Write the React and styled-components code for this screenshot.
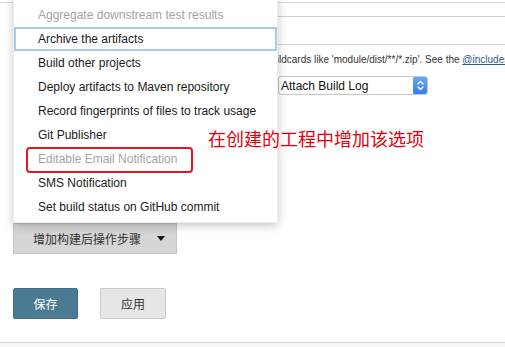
import React from "react";
import styled, { createGlobalStyle } from "styled-components";

const Global = createGlobalStyle`
  html, body { margin: 0; padding: 0; background: #fff; }
  body { font-family: "Liberation Sans", Arial, "Noto Sans CJK SC", sans-serif; color: #222; }
`;

const Page = styled.div`
  position: relative;
  width: 505px;
  height: 347px;
  overflow: hidden;
  display: flex;
  flex-direction: column;
  background: #fff;
`;

const Fields = styled.div`
  height: 223px;
  padding-top: 2px;
  box-sizing: border-box;
  display: flex;
  flex-direction: column;
`;

const Divider = styled.div`
  height: 1px;
  background: #d9d9d9;
`;

const TextInput = styled.div`
  margin-top: 13px;
  margin-left: 13px;
  width: 560px;
  height: 29px;
  box-sizing: border-box;
  border: 1px solid #cfcfcf;
`;

const HelpRow = styled.div`
  margin-top: 8px;
  display: flex;
  white-space: nowrap;
  font-size: 10px;
  line-height: 14px;
  color: #333;
`;

const HelpPrefix = styled.span`
  width: 279px;
  flex: none;
  display: flex;
  justify-content: flex-end;
  overflow: hidden;
`;

const HelpLink = styled.span`
  color: #2a5a8a;
  text-decoration: underline;
`;

const Select = styled.div`
  margin-top: 9px;
  margin-left: 278px;
  width: 150px;
  height: 19px;
  box-sizing: border-box;
  border: 1px solid #c6c6c6;
  border-radius: 3px;
  display: flex;
  align-items: center;
  justify-content: space-between;
  font-size: 12px;
  color: #111;
  padding-left: 2px;
  background: #fff;
  overflow: hidden;
`;

const Stepper = styled.div`
  width: 15px;
  height: 19px;
  margin-right: -1px;
  border-radius: 3px;
  background: linear-gradient(#6aaaf7, #2f7ef0);
  display: flex;
  align-items: center;
  justify-content: center;
`;

const AddStepButton = styled.div`
  margin-left: 13px;
  width: 164px;
  height: 31px;
  box-sizing: border-box;
  border: 1px solid #c4c4c4;
  background: #d6d6d6;
  display: flex;
  align-items: center;
  justify-content: space-between;
  padding: 0 11px 0 19px;
  font-family: "Noto Sans CJK SC", sans-serif;
  font-size: 12px;
  color: #333;
`;

const Actions = styled.div`
  margin-top: 34px;
  margin-left: 13px;
  display: flex;
  gap: 22px;
`;

const ActionButton = styled.div`
  width: ${(p) => (p.$primary ? 65 : 66)}px;
  height: 31px;
  box-sizing: border-box;
  border: 1px solid ${(p) => (p.$primary ? "#3f6f86" : "#c9c9c9")};
  border-radius: 2px;
  background: ${(p) => (p.$primary ? "#4a7b93" : "#e6e6e6")};
  color: ${(p) => (p.$primary ? "#fff" : "#333")};
  display: flex;
  align-items: center;
  justify-content: center;
  font-family: "Noto Sans CJK SC", sans-serif;
  font-size: 12px;
`;

const Footer = styled.div`
  margin-top: auto;
  height: 4px;
  border-top: 1px solid #d6dad6;
  background: #f4f6f4;
`;

const Menu = styled.ul`
  position: absolute;
  left: 13px;
  top: -5px;
  width: 265px;
  margin: 0;
  padding: 8px 0 3px;
  list-style: none;
  background: #fff;
  box-sizing: border-box;
  border: 1px solid rgba(0, 0, 0, 0.07);
  border-top: none;
  box-shadow: 0 3px 9px rgba(0, 0, 0, 0.22);
`;

const MenuItem = styled.li`
  height: 24px;
  box-sizing: border-box;
  line-height: ${(p) => (p.$active ? 20 : 24)}px;
  padding-left: ${(p) => (p.$active ? 22 : 24)}px;
  font-size: 12px;
  color: ${(p) => (p.$disabled ? "#a3a3a3" : "#1a1a1a")};
  border: ${(p) => (p.$active ? "2px solid #a9c9ee" : "none")};
  white-space: nowrap;
`;

const NoteBox = styled.div`
  position: absolute;
  left: 26px;
  top: 147px;
  width: 167px;
  height: 26px;
  box-sizing: border-box;
  border: 2px solid #e5161f;
  border-radius: 4px;
`;

const NoteText = styled.div`
  position: absolute;
  left: 208px;
  top: 127px;
  font-family: "Noto Sans CJK SC", sans-serif;
  font-size: 18px;
  line-height: 22px;
  color: #e5000c;
  white-space: nowrap;
`;

const items = [
  { label: "Aggregate downstream test results", disabled: true },
  { label: "Archive the artifacts", active: true },
  { label: "Build other projects" },
  { label: "Deploy artifacts to Maven repository" },
  { label: "Record fingerprints of files to track usage" },
  { label: "Git Publisher" },
  { label: "Editable Email Notification", disabled: true },
  { label: "SMS Notification" },
  { label: "Set build status on GitHub commit" },
];

export default function App() {
  return (
    <>
      <Global />
      <Page>
        <Fields>
          <Divider />
          <TextInput />
          <HelpRow>
            <HelpPrefix>Can use wi</HelpPrefix>
            <span>
              ldcards like 'module/dist/**/*.zip'. See the <HelpLink>@includes</HelpLink> of Ant fileset for the exact format.
            </span>
          </HelpRow>
          <Select>
            <span>Attach Build Log</span>
            <Stepper>
              <svg width="9" height="13" viewBox="0 0 9 13" fill="none" stroke="#fff" strokeWidth="1.4" strokeLinecap="round" strokeLinejoin="round">
                <path d="M2 5 L4.5 2.5 L7 5" />
                <path d="M2 8 L4.5 10.5 L7 8" />
              </svg>
            </Stepper>
          </Select>
        </Fields>
        <AddStepButton>
          <span>增加构建后操作步骤</span>
          <svg width="8" height="5" viewBox="0 0 8 5">
            <path d="M0 0 L8 0 L4 5 Z" fill="#111" />
          </svg>
        </AddStepButton>
        <Actions>
          <ActionButton $primary>保存</ActionButton>
          <ActionButton>应用</ActionButton>
        </Actions>
        <Footer />
        <Menu>
          {items.map((it) => (
            <MenuItem key={it.label} $disabled={it.disabled} $active={it.active}>
              {it.label}
            </MenuItem>
          ))}
        </Menu>
        <NoteBox />
        <NoteText>在创建的工程中增加该选项</NoteText>
      </Page>
    </>
  );
}
